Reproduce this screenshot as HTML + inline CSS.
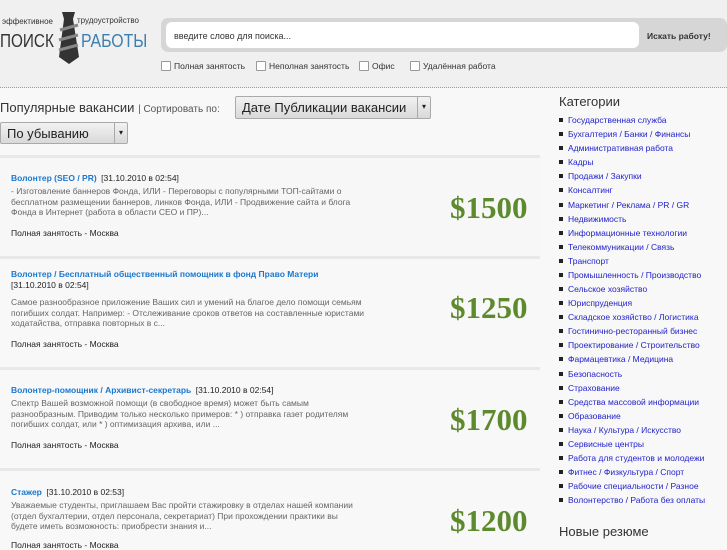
<!DOCTYPE html>
<html><head><meta charset="utf-8"><style>
*{margin:0;padding:0;box-sizing:border-box}
body{width:727px;height:545px;overflow:hidden;background:#f8f8f8;font-family:"Liberation Sans","DejaVu Sans",sans-serif;position:relative}
.hdr{position:absolute;left:0;top:0;width:727px;height:88px;background:#f0f0f0;border-bottom:1px dotted #5aaee0}
.a{position:absolute;white-space:nowrap}
.sb{position:absolute;left:161px;top:18px;width:566px;height:34px;background:#d6d6d6;border-radius:7px}
.si{position:absolute;left:166px;top:22px;width:473px;height:26px;background:#fff;border-radius:6px;font-size:9px;color:#333;padding:9px 0 0 8px}
.cb{display:inline-block;width:10px;height:10px;border:1px solid #999;background:#fff;vertical-align:-2px;margin-right:3px;border-radius:1px}
.chk{font-size:8.5px;color:#333}
.sel{position:absolute;background:linear-gradient(#f2f2f2,#d9d9d9);border:1px solid #aaa;border-radius:2px;font-size:13px;color:#222;padding:3px 6px}
.sel i{position:absolute;right:0;top:0;width:13px;height:100%;border-left:1px solid #aaa;font-style:normal;font-size:8px;text-align:center;line-height:20px}
.job{position:absolute;left:0;width:540px;border-top:3px solid #e8e8e8}
.t{font-size:8.5px;color:#1a78d0;font-weight:bold}
.d{font-size:8.5px;color:#222}
.x{font-size:8.5px;color:#666;line-height:10.5px}
.f{font-size:8.5px;color:#222}
.p{position:absolute;left:450px;font-family:"Liberation Serif",serif;font-weight:bold;font-size:31px;color:#5e8a2e}
.cat{position:absolute;left:559px;font-size:8.5px;color:#2222cc;white-space:nowrap}
.cat:before{content:"";display:inline-block;width:4px;height:4px;background:#222;margin-right:5px;vertical-align:1px}
</style></head><body>
<div class="hdr"></div>
<div class="a" style="left:2px;top:17px;font-size:8px;color:#333">эффективное</div>
<div class="a" style="left:77px;top:16px;font-size:8px;color:#333">трудоустройство</div>
<div class="a" style="left:0;top:31px;font-size:18px;color:#333;transform:scaleX(0.85);transform-origin:0 0">ПОИСК</div>
<div class="a" style="left:81px;top:31px;font-size:18px;color:#3b7fb0;transform:scaleX(0.88);transform-origin:0 0">РАБОТЫ</div>
<svg class="a" style="left:56px;top:10px" width="25" height="54"><path d="M6 2h13l-2 7l6 38l-10 7l-10-7l5-38z" fill="#333"/><path d="M4 20l18-5M3 30l19-5M3 40l19-5" stroke="#888" stroke-width="3"/></svg>
<div class="sb"></div>
<div class="si">введите слово для поиска...</div>
<div class="a" style="left:647px;top:31px;font-size:8.5px;color:#333;font-weight:bold">Искать работу!</div>
<div class="a chk" style="left:161px;top:61px"><span class="cb"></span>Полная занятость</div>
<div class="a chk" style="left:256px;top:61px"><span class="cb"></span>Неполная занятость</div>
<div class="a chk" style="left:359px;top:61px"><span class="cb"></span>Офис</div>
<div class="a chk" style="left:410px;top:61px"><span class="cb"></span>Удалённая работа</div>
<div class="a" style="left:0;top:100px;font-size:13px;color:#333">Популярные вакансии <span style="font-size:10px;color:#555">| Сортировать по:</span></div>
<div class="sel" style="left:235px;top:96px;width:196px;height:23px">Дате Публикации вакансии<i>▾</i></div>
<div class="sel" style="left:0;top:122px;width:128px;height:22px">По убыванию<i>▾</i></div>
<div class="job" style="top:155px;height:102px;background:#f7f7f7"></div>
<div class="a" style="left:11px;top:168px"><span class="t">Волонтер (SEO / PR)</span> <span class="d">[31.10.2010 в 02:54]</span></div>
<div class="a x" style="left:11px;top:186px">- Изготовление баннеров Фонда, ИЛИ - Переговоры с популярными ТОП-сайтами о<br>бесплатном размещении баннеров, линков Фонда, ИЛИ - Продвижение сайта и блога<br>Фонда в Интернет (работа в области СЕО и ПР)...</div>
<div class="a f" style="left:11px;top:228px">Полная занятость - Москва</div>
<div class="p" style="top:190px">$1500</div>
<div class="job" style="top:256px;height:112px"></div>
<div class="a t" style="left:11px;top:269px">Волонтер / Бесплатный общественный помощник в фонд Право Матери</div>
<div class="a d" style="left:11px;top:280px">[31.10.2010 в 02:54]</div>
<div class="a x" style="left:11px;top:297px">Самое разнообразное приложение Ваших сил и умений на благое дело помощи семьям<br>погибших солдат. Например: - Отслеживание сроков ответов на составленные юристами<br>ходатайства, отправка повторных в с...</div>
<div class="a f" style="left:11px;top:339px">Полная занятость - Москва</div>
<div class="p" style="top:290px">$1250</div>
<div class="job" style="top:367px;height:102px"></div>
<div class="a" style="left:11px;top:380px"><span class="t">Волонтер-помощник / Архивист-секретарь</span> <span class="d">[31.10.2010 в 02:54]</span></div>
<div class="a x" style="left:11px;top:398px">Спектр Вашей возможной помощи (в свободное время) может быть самым<br>разнообразным. Приводим только несколько примеров: * ) отправка газет родителям<br>погибших солдат, или * ) оптимизация архива, или ...</div>
<div class="a f" style="left:11px;top:440px">Полная занятость - Москва</div>
<div class="p" style="top:402px">$1700</div>
<div class="job" style="top:468px;height:80px"></div>
<div class="a" style="left:11px;top:482px"><span class="t">Стажер</span> <span class="d">[31.10.2010 в 02:53]</span></div>
<div class="a x" style="left:11px;top:500px">Уважаемые студенты, приглашаем Вас пройти стажировку в отделах нашей компании<br>(отдел бухгалтерии, отдел персонала, секретариат) При прохождении практики вы<br>будете иметь возможность: приобрести знания и...</div>
<div class="a f" style="left:11px;top:540px">Полная занятость - Москва</div>
<div class="p" style="top:503px">$1200</div>
<div class="a" style="left:559px;top:94px;font-size:13px;color:#333">Категории</div>
<div class="cat" style="top:115px">Государственная служба</div>
<div class="cat" style="top:129px">Бухгалтерия / Банки / Финансы</div>
<div class="cat" style="top:143px">Административная работа</div>
<div class="cat" style="top:157px">Кадры</div>
<div class="cat" style="top:171px">Продажи / Закупки</div>
<div class="cat" style="top:185px">Консалтинг</div>
<div class="cat" style="top:200px">Маркетинг / Реклама / PR / GR</div>
<div class="cat" style="top:214px">Недвижимость</div>
<div class="cat" style="top:228px">Информационные технологии</div>
<div class="cat" style="top:242px">Телекоммуникации / Связь</div>
<div class="cat" style="top:256px">Транспорт</div>
<div class="cat" style="top:270px">Промышленность / Производство</div>
<div class="cat" style="top:284px">Сельское хозяйство</div>
<div class="cat" style="top:298px">Юриспруденция</div>
<div class="cat" style="top:312px">Складское хозяйство / Логистика</div>
<div class="cat" style="top:326px">Гостинично-ресторанный бизнес</div>
<div class="cat" style="top:340px">Проектирование / Строительство</div>
<div class="cat" style="top:354px">Фармацевтика / Медицина</div>
<div class="cat" style="top:369px">Безопасность</div>
<div class="cat" style="top:383px">Страхование</div>
<div class="cat" style="top:397px">Средства массовой информации</div>
<div class="cat" style="top:411px">Образование</div>
<div class="cat" style="top:425px">Наука / Культура / Искусство</div>
<div class="cat" style="top:439px">Сервисные центры</div>
<div class="cat" style="top:453px">Работа для студентов и молодежи</div>
<div class="cat" style="top:467px">Фитнес / Физкультура / Спорт</div>
<div class="cat" style="top:481px">Рабочие специальности / Разное</div>
<div class="cat" style="top:495px">Волонтерство / Работа без оплаты</div>
<div class="a" style="left:559px;top:524px;font-size:13px;color:#333">Новые резюме</div>
</body></html>
